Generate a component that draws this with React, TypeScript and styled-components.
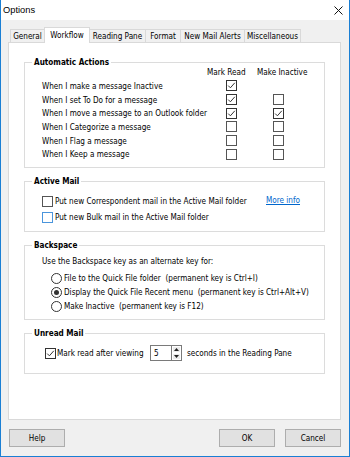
import React from "react";
import styled, { createGlobalStyle } from "styled-components";

const GlobalStyle = createGlobalStyle`
  html, body {
    margin: 0;
    padding: 0;
    background: #fff;
  }
  body {
    font-family: "DejaVu Sans Condensed", "Liberation Sans", sans-serif;
    font-size: 8.1px;
    color: #000;
  }
`;

const ACTIONS = [
  { label: "When I make a message Inactive", read: true, inactive: null },
  { label: "When I set To Do for a message", read: true, inactive: false },
  { label: "When I move a message to an Outlook folder", read: true, inactive: true },
  { label: "When I Categorize a message", read: false, inactive: false },
  { label: "When I Flag a message", read: false, inactive: false },
  { label: "When I Keep a message", read: false, inactive: false },
];

const TABS = [
  { name: "General", width: 35 },
  { name: "Workflow", width: 46, active: true },
  { name: "Reading Pane", width: 57 },
  { name: "Format", width: 36 },
  { name: "New Mail Alerts", width: 65 },
  { name: "Miscellaneous", width: 57 },
];

const BACKSPACE = [
  { text: "File to the Quick File folder  (permanent key is Ctrl+I)", on: false },
  { text: "Display the Quick File Recent menu  (permanent key is Ctrl+Alt+V)", on: true },
  { text: "Make Inactive  (permanent key is F12)", on: false },
];

const Check = ({ checked = false, focus = false }: { checked?: boolean; focus?: boolean }) => (
  <Box $focus={focus} $checked={checked}>
    {checked && (
      <svg width="9" height="9" viewBox="0 0 9 9">
        <polyline points="1.2,4.6 3.4,6.8 7.8,1.8" fill="none" stroke="#333" strokeWidth="1" />
      </svg>
    )}
  </Box>
);

const App: React.FC = () => {
  return (
    <>
      <GlobalStyle />
      <Window>
        <TitleBar>
          <span>Options</span>
          <svg width="9" height="9" viewBox="0 0 9 9">
            <path d="M0.5 0.5 L8.5 8.5 M8.5 0.5 L0.5 8.5" stroke="#111" strokeWidth="1" />
          </svg>
        </TitleBar>
        <Body>
          <TabStrip>
            {TABS.map((t) => (
              <Tab key={t.name} $width={t.width} $active={!!t.active}>
                {t.name}
              </Tab>
            ))}
          </TabStrip>
          <Panel>
            <Group>
              <Legend>Automatic Actions</Legend>
              <ActionGrid>
                <span />
                <span>Mark Read</span>
                <span>Make Inactive</span>
                {ACTIONS.map((a) => (
                  <React.Fragment key={a.label}>
                    <ActionLabel>{a.label}</ActionLabel>
                    <CheckCell $indent={19}>
                      <Check checked={a.read} />
                    </CheckCell>
                    <CheckCell $indent={16}>
                      {a.inactive !== null && <Check checked={a.inactive} />}
                    </CheckCell>
                  </React.Fragment>
                ))}
              </ActionGrid>
            </Group>

            <Group>
              <Legend>Active Mail</Legend>
              <ActiveBody>
                <OptionRow>
                  <Check />
                  <span>Put new Correspondent mail in the Active Mail folder</span>
                  <MoreInfo href="#">More info</MoreInfo>
                </OptionRow>
                <OptionRow>
                  <Check focus />
                  <span>Put new Bulk mail in the Active Mail folder</span>
                </OptionRow>
              </ActiveBody>
            </Group>

            <Group>
              <Legend>Backspace</Legend>
              <BackspaceBody>
                <Hint>Use the Backspace key as an alternate key for:</Hint>
                <RadioList>
                  {BACKSPACE.map((r) => (
                    <RadioRow key={r.text}>
                      <Radio $on={r.on} />
                      <span>{r.text}</span>
                    </RadioRow>
                  ))}
                </RadioList>
              </BackspaceBody>
            </Group>

            <Group>
              <Legend>Unread Mail</Legend>
              <UnreadBody>
                <UnreadLabel>
                  <Check checked />
                  <span>Mark read after viewing</span>
                </UnreadLabel>
                <Spin>
                  <SpinValue>5</SpinValue>
                  <SpinButtons>
                    <SpinButton>
                      <svg width="5" height="3" viewBox="0 0 5 3">
                        <path d="M0 3 L2.5 0 L5 3 Z" fill="#222" />
                      </svg>
                    </SpinButton>
                    <SpinButton>
                      <svg width="5" height="3" viewBox="0 0 5 3">
                        <path d="M0 0 L2.5 3 L5 0 Z" fill="#222" />
                      </svg>
                    </SpinButton>
                  </SpinButtons>
                </Spin>
                <span>seconds in the Reading Pane</span>
              </UnreadBody>
            </Group>
          </Panel>
          <Footer>
            <Button>Help</Button>
            <Spacer />
            <Button>OK</Button>
            <Button>Cancel</Button>
          </Footer>
        </Body>
      </Window>
    </>
  );
};

export default App;

const Window = styled.div`
  width: 350px;
  height: 457px;
  box-sizing: border-box;
  border: 1px solid #1a7fd4;
  border-top: none;
  background: #f0f0f0;
  display: flex;
  flex-direction: column;
`;

const TitleBar = styled.div`
  height: 20px;
  flex: 0 0 20px;
  background: #fff;
  display: flex;
  align-items: center;
  justify-content: space-between;
  padding: 0 6px 0 2px;
  font-family: "Liberation Sans", sans-serif;
  font-size: 9.3px;
`;

const Body = styled.div`
  flex: 1;
  display: flex;
  flex-direction: column;
  padding: 7px 8px 0 7px;
`;

const TabStrip = styled.div`
  height: 15px;
  display: flex;
  align-items: flex-end;
  padding-left: 2px;
`;

const Tab = styled.div<{ $width: number; $active: boolean }>`
  box-sizing: border-box;
  width: ${({ $width }) => $width}px;
  height: ${({ $active }) => ($active ? 16 : 13)}px;
  margin-bottom: ${({ $active }) => ($active ? -1 : 0)}px;
  margin-right: -1px;
  border: 1px solid #d9d9d9;
  border-bottom: none;
  background: ${({ $active }) => ($active ? "#fff" : "#f0f0f0")};
  position: relative;
  z-index: ${({ $active }) => ($active ? 1 : 0)};
  display: flex;
  justify-content: center;
  align-items: ${({ $active }) => ($active ? "flex-start" : "center")};
  padding-top: ${({ $active }) => ($active ? 2 : 0)}px;
  white-space: nowrap;
`;

const Panel = styled.div`
  box-sizing: border-box;
  height: 378px;
  background: #fff;
  border: 1px solid #d9d9d9;
  padding: 14px 15px 0 15px;
  display: flex;
  flex-direction: column;
  gap: 8px;
`;

const Group = styled.fieldset`
  margin: 0;
  padding: 0;
  min-inline-size: 0;
  border: 1px solid #dcdcdc;
`;

const Legend = styled.legend`
  margin-left: 7px;
  padding: 0 2px;
  line-height: 10px;
  font-weight: bold;
`;

const ActionGrid = styled.div`
  display: grid;
  grid-template-columns: 165px 50px 1fr;
  grid-template-rows: 12px;
  grid-auto-rows: 13.7px;
  row-gap: 0;
  padding: 0 0 6px 17px;
  align-items: center;

  & > span:nth-child(-n + 3) {
    margin-bottom: 2px;
  }
`;

const ActionLabel = styled.span`
  white-space: nowrap;
`;

const CheckCell = styled.div<{ $indent: number }>`
  display: flex;
  align-items: center;
  padding-left: ${({ $indent }) => $indent}px;
`;

const Box = styled.span<{ $focus: boolean; $checked: boolean }>`
  box-sizing: border-box;
  flex: 0 0 11px;
  width: 11px;
  height: 11px;
  border: 1px solid ${({ $focus, $checked }) => ($focus ? "#4a95dc" : $checked ? "#333" : "#555")};
  background: #fff;
  display: flex;
  align-items: center;
  justify-content: center;
`;

const ActiveBody = styled.div`
  padding: 7px 0 6px 17px;
`;

const OptionRow = styled.div`
  height: 16px;
  display: grid;
  grid-template-columns: 11px 209px auto;
  column-gap: 2px;
  align-items: center;
  white-space: nowrap;
`;

const MoreInfo = styled.a`
  color: #0066cc;
  text-decoration: underline;
  margin-top: -2px;
`;

const BackspaceBody = styled.div`
  padding: 5px 0 6px 17px;
`;

const Hint = styled.div`
  line-height: 12px;
`;

const RadioList = styled.div`
  margin-top: 4px;
  padding-left: 9px;
`;

const RadioRow = styled.div`
  height: 14px;
  display: flex;
  align-items: center;
  gap: 2px;
  white-space: pre;
`;

const Radio = styled.span<{ $on: boolean }>`
  box-sizing: border-box;
  width: 11px;
  height: 11px;
  border: 1px solid #333;
  border-radius: 50%;
  background: #fff;
  display: flex;
  align-items: center;
  justify-content: center;

  &::after {
    content: "";
    width: 5px;
    height: 5px;
    border-radius: 50%;
    background: ${({ $on }) => ($on ? "#333" : "transparent")};
  }
`;

const UnreadBody = styled.div`
  height: 16px;
  padding: 7px 0 12px 20px;
  display: flex;
  align-items: center;
  white-space: nowrap;
`;

const UnreadLabel = styled.div`
  flex: 0 0 105px;
  display: flex;
  align-items: center;
  gap: 1px;
`;

const Spin = styled.div`
  display: flex;
  height: 16px;
  margin-right: 5px;
`;

const SpinValue = styled.div`
  box-sizing: border-box;
  width: 21px;
  height: 16px;
  border: 1px solid #7a7a7a;
  border-right: none;
  padding-left: 3px;
  display: flex;
  align-items: center;
`;

const SpinButtons = styled.div`
  box-sizing: border-box;
  width: 11px;
  height: 16px;
  border: 1px solid #7a7a7a;
  display: flex;
  flex-direction: column;
`;

const SpinButton = styled.div`
  flex: 1;
  background: #ececec;
  border: 1px solid #fff;
  display: flex;
  align-items: center;
  justify-content: center;
`;

const Footer = styled.div`
  display: flex;
  gap: 10px;
  padding: 9px 0 0 1px;
`;

const Spacer = styled.div`
  flex: 1;
`;

const Button = styled.div`
  box-sizing: border-box;
  width: 56px;
  height: 18px;
  background: #e1e1e1;
  border: 1px solid #adadad;
  display: flex;
  align-items: center;
  justify-content: center;
`;
